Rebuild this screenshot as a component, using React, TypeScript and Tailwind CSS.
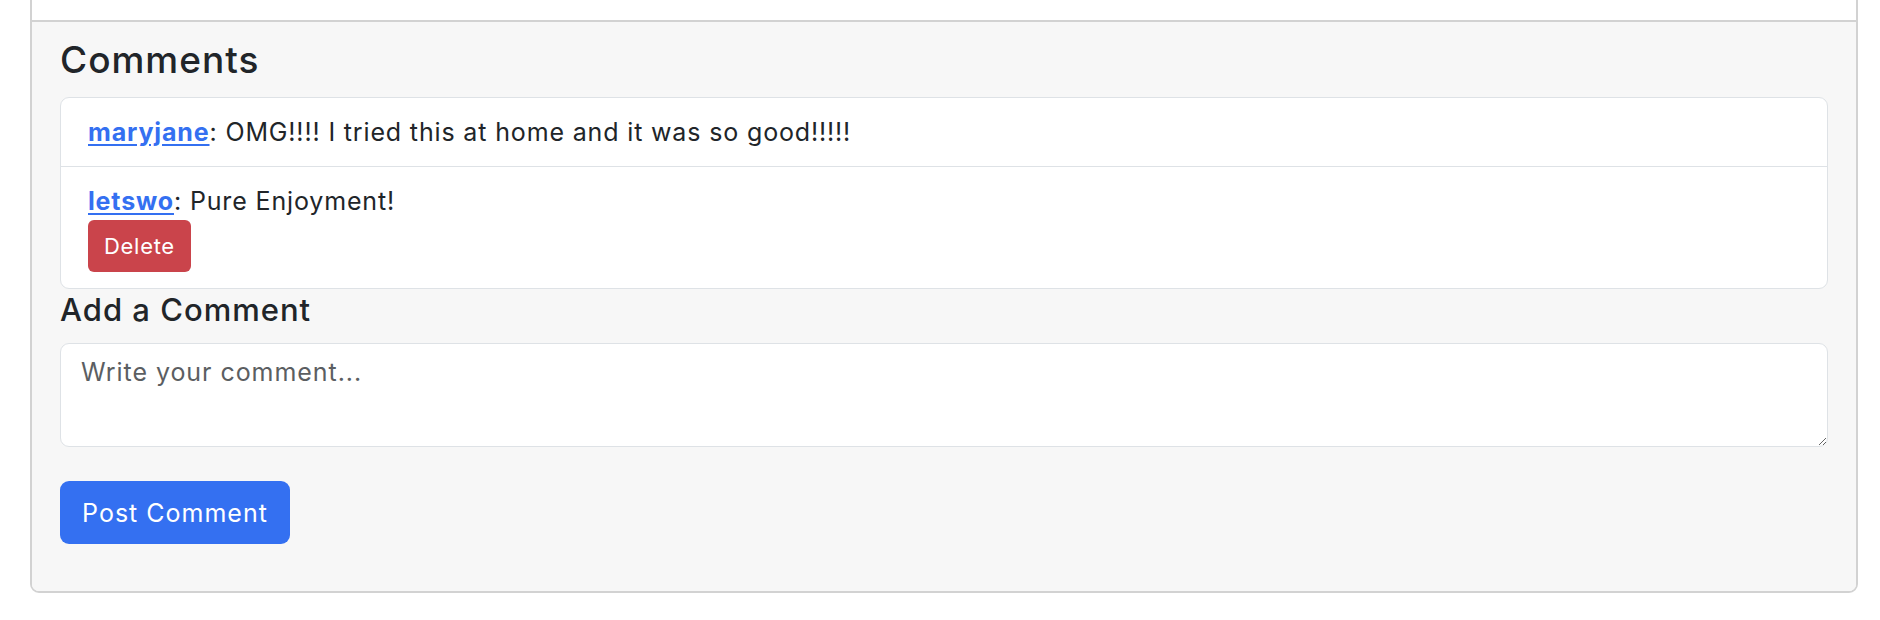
import React from "react";

export default function App() {
  return (
    <div
      className="w-[1880px] h-[620px] bg-white overflow-hidden pl-[30px] pr-[22px] text-[#212529]"
      style={{ fontFamily: "Inter, 'Noto Sans', 'Liberation Sans', sans-serif" }}
    >
      <div className="-mt-[40px] h-[633px] border-2 border-[#d2d2d2] rounded-[9px] bg-white flex flex-col overflow-hidden">
        <div className="h-[58px] shrink-0 bg-white" />
        <div className="flex-1 bg-[#f7f7f7] border-t-2 border-[#d2d2d2] px-[28px] pt-[16px]">
          <h2 className="text-[37px] leading-[43px] font-medium tracking-[1px]">Comments</h2>
          <ul className="mt-[16px] bg-white border border-[#dee2e6] rounded-[9px] text-[25px] leading-[36px] tracking-[0.85px]">
            <li className="px-[27px] py-[16px] border-b border-[#dee2e6]">
              <a href="#" className="font-bold text-[#3470f1] underline underline-offset-[3px]">maryjane</a>
              <span>: OMG!!!! I tried this at home and it was so good!!!!!</span>
            </li>
            <li className="px-[27px] py-[16px]">
              <div>
                <a href="#" className="font-bold text-[#3470f1] underline underline-offset-[3px]">letswo</a>
                <span>: Pure Enjoyment!</span>
              </div>
              <button className="mt-[1px] h-[52px] px-[16px] rounded-[6px] bg-[#ca444b] text-white text-[22px] leading-[32px] tracking-[0.7px]">
                Delete
              </button>
            </li>
          </ul>
          <h4 className="mt-[3px] text-[31px] leading-[36px] font-medium tracking-[1px]">Add a Comment</h4>
          <textarea
            placeholder="Write your comment..."
            className="mt-[15px] block w-full h-[104px] bg-white border border-[#dee2e6] rounded-[9px] px-[20px] py-[10px] text-[25px] leading-[36px] tracking-[0.95px] placeholder:text-[#5b5e62] outline-none"
          />
          <button className="mt-[34px] h-[63px] w-[230px] rounded-[9px] bg-[#3470f1] text-white text-[25px] leading-[36px] tracking-[1px]">
            Post Comment
          </button>
        </div>
      </div>
    </div>
  );
}
